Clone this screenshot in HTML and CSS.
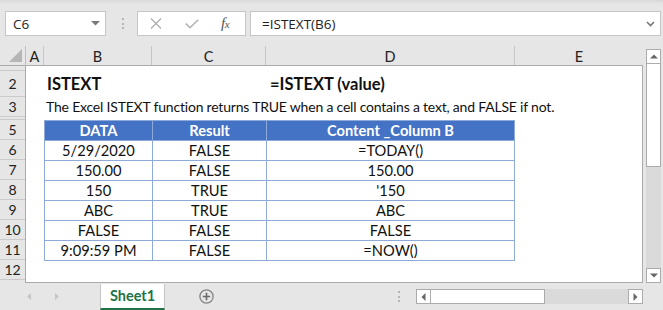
FILE: index.html
```html
<!DOCTYPE html>
<html>
<head>
<meta charset="utf-8">
<link rel="stylesheet" href="styles.css">
</head>
<body>
<div class="app">
  <div class="fbar">
    <div class="namebox"><span>C6</span><svg width="9" height="5" viewBox="0 0 9 5"><path d="M0 0H9L4.5 4.5Z" fill="#7a7a7a"/></svg></div>
    <div class="grip"><i></i><i></i><i></i></div>
    <div class="fbtns">
      <svg class="ix" width="12" height="11" viewBox="0 0 12 11"><path d="M1 0.5L11 10.5M11 0.5L1 10.5" stroke="#b0b0b0" stroke-width="1.4" fill="none"/></svg>
      <svg class="ic" width="14" height="10" viewBox="0 0 14 10"><path d="M0.8 4.5L5 8.8L13.2 0.8" stroke="#b0b0b0" stroke-width="1.5" fill="none"/></svg>
      <span class="fx">f<small>x</small></span>
    </div>
    <div class="finput"><span>=ISTEXT(B6)</span><svg class="chev" width="9" height="6" viewBox="0 0 9 6"><path d="M1 1L4.5 4.5L8 1" stroke="#777" stroke-width="1.6" fill="none"/></svg></div>
  </div>
  <div class="main">
    <div class="sheet">
      <div class="corner"><svg width="13" height="13" viewBox="0 0 13 13"><path d="M13 0V13H0Z" fill="#b5b5b5"/></svg></div>
      <div class="colheads">
        <div class="ch a">A</div><div class="ch b">B</div><div class="ch c">C</div><div class="ch d">D</div><div class="ch e">E</div>
      </div>
      <div class="rowheads">
        <div class="rh h5"></div>
        <div class="rh h26">2</div>
        <div class="rh">3</div>
        <div class="rh h3"></div>
        <div class="rh">5</div>
        <div class="rh">6</div>
        <div class="rh">7</div>
        <div class="rh">8</div>
        <div class="rh">9</div>
        <div class="rh">10</div>
        <div class="rh">11</div>
        <div class="rh">12</div>
        <div class="rh rest"></div>
      </div>
      <div class="cells">
        <div class="row h5"></div>
        <div class="row h26 title">
          <div class="a"></div><div class="b">ISTEXT</div><div class="c"></div><div class="d">=ISTEXT (value)</div>
        </div>
        <div class="row desc">
          <div class="a"></div><div class="b">The Excel ISTEXT function returns TRUE when a cell contains a text, and FALSE if not.</div>
        </div>
        <div class="row h3"></div>
        <div class="row head">
          <div class="a"></div><div class="b t">DATA</div><div class="c t">Result</div><div class="d t">Content _Column B</div>
        </div>
        <div class="row">
          <div class="a"></div><div class="b t">5/29/2020</div><div class="c t">FALSE</div><div class="d t">=TODAY()</div>
        </div>
        <div class="row">
          <div class="a"></div><div class="b t">150.00</div><div class="c t">FALSE</div><div class="d t">150.00</div>
        </div>
        <div class="row">
          <div class="a"></div><div class="b t">150</div><div class="c t">TRUE</div><div class="d t">'150</div>
        </div>
        <div class="row">
          <div class="a"></div><div class="b t">ABC</div><div class="c t">TRUE</div><div class="d t">ABC</div>
        </div>
        <div class="row">
          <div class="a"></div><div class="b t">FALSE</div><div class="c t">FALSE</div><div class="d t">FALSE</div>
        </div>
        <div class="row last">
          <div class="a"></div><div class="b t">9:09:59 PM</div><div class="c t">FALSE</div><div class="d t">=NOW()</div>
        </div>
      </div>
    </div>
    <div class="vside">
      <div class="vscroll">
        <div class="sbtn"><svg width="8" height="5" viewBox="0 0 8 5"><path d="M0 4.5H8L4 0.5Z" fill="#666"/></svg></div>
        <div class="vthumb"></div>
        <div class="vtrack"></div>
        <div class="sbtn"><svg width="8" height="5" viewBox="0 0 8 5"><path d="M0 0.5H8L4 4.5Z" fill="#666"/></svg></div>
      </div>
    </div>
  </div>
  <div class="tabbar">
    <svg class="nav1" width="4" height="7" viewBox="0 0 4 7"><path d="M4 0V7L0 3.5Z" fill="#c6c6c6"/></svg>
    <svg class="nav2" width="4" height="7" viewBox="0 0 4 7"><path d="M0 0V7L4 3.5Z" fill="#c6c6c6"/></svg>
    <div class="tab">Sheet1</div>
    <svg class="plus" width="15" height="15" viewBox="0 0 15 15"><circle cx="7.5" cy="7.5" r="6.6" stroke="#858585" stroke-width="1.3" fill="none"/><path d="M7.5 3.8V11.2M3.8 7.5H11.2" stroke="#6a6a6a" stroke-width="1.6"/></svg>
    <div class="grip2"><i></i><i></i><i></i></div>
    <div class="hscroll">
      <div class="sbtn"><svg width="5" height="8" viewBox="0 0 5 8"><path d="M4.5 0V8L0.5 4Z" fill="#666"/></svg></div>
      <div class="hthumb"></div>
      <div class="htrack"></div>
      <div class="sbtn"><svg width="5" height="8" viewBox="0 0 5 8"><path d="M0.5 0V8L4.5 4Z" fill="#666"/></svg></div>
    </div>
  </div>
</div>
</body>
</html>
```
FILE: styles.css
```css
* { box-sizing: border-box; margin: 0; padding: 0; }
body {
  margin: 0;
  width: 663px;
  height: 310px;
  overflow: hidden;
  background: #e6e6e6;
  font-family: Lato, "Liberation Sans", sans-serif;
  color: #111;
}
.app { display: flex; flex-direction: column; width: 663px; height: 310px; }

/* formula bar */
.fbar {
  height: 46px;
  flex: none;
  display: flex;
  align-items: flex-start;
  padding-top: 11px;
  background: linear-gradient(#d8d8d8 0, #e6e6e6 4px);
}
.namebox {
  margin-left: 5px;
  width: 101px;
  height: 25px;
  background: #fff;
  border: 1px solid #c6c6c6;
  display: flex;
  align-items: center;
  padding-left: 7px;
  font: 13.5px "Open Sans", sans-serif;
  color: #222;
}
.namebox span { flex: 1; }
.namebox svg { margin-right: 5px; }
.grip {
  margin-left: 16px;
  width: 2px;
  height: 25px;
  display: flex;
  flex-direction: column;
  justify-content: center;
  gap: 2.5px;
}
.grip i, .grip2 i { display: block; width: 2px; height: 2px; background: #b5b5b5; }
.fbtns {
  margin-left: 13px;
  width: 109px;
  height: 25px;
  background: #fff;
  border: 1px solid #c6c6c6;
  display: flex;
  align-items: center;
}
.ix { margin-left: 12px; }
.ic { margin-left: 23px; }
.fx {
  margin-left: 22px;
  font: italic 15px "Liberation Serif", serif;
  color: #555;
  letter-spacing: -0.5px;
}
.fx small { font-size: 11px; }
.finput {
  margin-left: 4px;
  width: 411px;
  height: 25px;
  background: #fff;
  border: 1px solid #c6c6c6;
  display: flex;
  align-items: center;
  padding-left: 11px;
  font: 13.5px "Open Sans", sans-serif;
  color: #222;
}
.chev { margin-left: auto; margin-right: 5px; }

/* sheet */
.main { display: flex; height: 237px; flex: none; }
.sheet {
  width: 643px;
  display: grid;
  grid-template-columns: 26px 617px;
  grid-template-rows: 20px 217px;
}
.corner {
  border-right: 1px solid #c0c0c0;
  border-bottom: 1px solid #ababab;
  display: flex;
  align-items: flex-end;
  justify-content: flex-end;
  padding: 0 3px 3px 0;
}
.colheads { display: flex; border-bottom: 1px solid #ababab; }
.ch {
  flex: none;
  display: flex;
  align-items: center;
  justify-content: center;
  border-right: 1px solid #c6c6c6;
  font-size: 14.5px;
  color: #222;
  padding-top: 1px;
}
.ch.e { border-right: none; width: 128px; }
.a { width: 18px; flex: none; }
.b { width: 108px; flex: none; }
.c { width: 114px; flex: none; }
.d { width: 249px; flex: none; }

.rowheads {
  display: flex;
  flex-direction: column;
  border-right: 1px solid #ababab;
  overflow: hidden;
}
.rh {
  flex: none;
  height: 20px;
  border-bottom: 1px solid #cacaca;
  display: flex;
  align-items: center;
  justify-content: center;
  font-size: 14px;
  color: #222;
  overflow: hidden;
}
.rh.rest { flex: 1; border-bottom: none; }

.cells {
  background: #fff;
  border-right: 1px solid #ababab;
  border-bottom: 1px solid #ababab;
  display: flex;
  flex-direction: column;
  overflow: hidden;
  font-size: 14.67px;
}
.row { display: flex; height: 20px; flex: none; }
.rh.h5, .row.h5 { height: 5px; }
.rh.h26, .row.h26 { height: 26px; }
.rh.h3, .row.h3 { height: 3px; }
.row > div { white-space: nowrap; }
.title > div { font-weight: bold; font-size: 16.5px; line-height: 27px; }
.title .b { padding-left: 3px; }
.title .d { padding-left: 4px; }
.desc .b { padding-left: 2px; line-height: 20px; overflow: visible; font-size: 14px; letter-spacing: -0.2px; }
.t {
  display: flex;
  align-items: center;
  justify-content: center;
  border-left: 1px solid #8eaadb;
  border-top: 1px solid #8eaadb;
}
.t.d { border-right: 1px solid #8eaadb; }
.row.last { height: 21px; }
.last .t { border-bottom: 1px solid #8eaadb; }
.head .t { background: #4472c4; color: #fff; font-weight: bold; }

/* vertical scrollbar */
.vside { width: 20px; padding: 3px 0 0 3px; }
.vscroll { width: 15px; height: 234px; display: flex; flex-direction: column; background: #dadada; }
.sbtn {
  flex: none;
  width: 15px;
  height: 15px;
  background: #fff;
  border: 1px solid #ababab;
  display: flex;
  align-items: center;
  justify-content: center;
}
.vthumb { height: 103px; background: #fff; border: 1px solid #ababab; border-top: none; flex: none; }
.vtrack { flex: 1; }

/* tab bar */
.tabbar { height: 27px; flex: none; display: flex; align-items: center; }
.nav1 { margin-left: 27px; }
.nav2 { margin-left: 24px; }
.tab {
  margin-left: 41px;
  width: 65px;
  height: 26px;
  align-self: flex-end;
  background: #fff;
  border-left: 1px solid #c6c6c6;
  border-right: 1px solid #c6c6c6;
  border-bottom: 2px solid #217346;
  color: #217346;
  font-weight: bold;
  font-size: 14.5px;
  display: flex;
  align-items: center;
  justify-content: center;
  padding-bottom: 1px;
}
.plus { margin-left: 34px; }
.grip2 {
  margin-left: 184px;
  width: 2px;
  display: flex;
  flex-direction: column;
  gap: 2.5px;
}
.hscroll {
  margin-left: 16px;
  width: 227px;
  height: 15px;
  display: flex;
  background: #dadada;
}
.hthumb { width: 114px; background: #fff; border: 1px solid #ababab; border-left: none; flex: none; }
.htrack { flex: 1; }
```
